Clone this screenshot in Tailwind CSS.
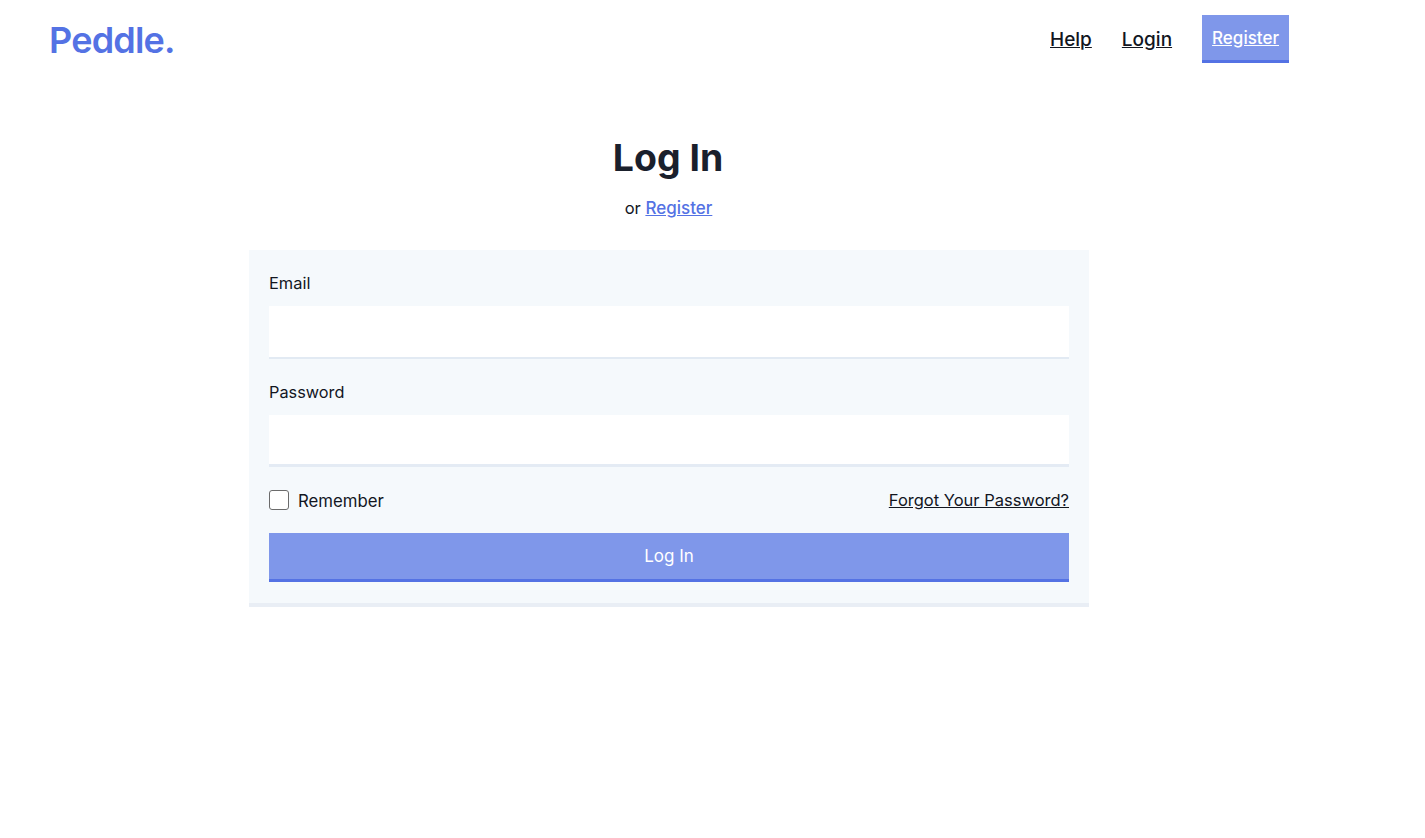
<!DOCTYPE html>
<html lang="en">
<head>
    <meta charset="UTF-8">
    <meta name="viewport" content="width=device-width, initial-scale=1.0">
    <title>Peddle - Log In</title>
    <script src="https://cdn.jsdelivr.net/npm/@tailwindcss/browser@4"></script>
</head>
<body class="bg-white min-h-screen font-['Inter',sans-serif] text-[#12161f]">
    <!-- Nav -->
    <nav class="flex items-center justify-between h-[78px] pl-[49px] pr-[136px]">
        <a href="#" class="pt-[2px] text-[36px] font-semibold text-[#5472e4] tracking-[-0.8px]">Peddle.</a>
        <div class="flex items-center gap-[30px]">
            <a href="#" class="pt-[2px] text-[19px] font-medium underline">Help</a>
            <a href="#" class="pt-[2px] text-[19px] font-medium underline">Login</a>
            <a href="#" class="h-12 px-[10px] pt-[11px] bg-[#7f97ea] border-b-[3px] border-[#5472e4] text-[17px] text-white font-medium underline">Register</a>
        </div>
    </nav>

    <main class="w-[840px] ml-[249px] mt-[54px]">
        <h1 class="text-center pr-[2px] text-[37.4px] leading-[52px] font-bold text-[#1a202c]">Log In</h1>
        <p class="text-center pr-[1px] mt-[12px] leading-6 text-[16.5px]">or <a href="#" class="text-[17px] font-medium text-[#5472e4] underline">Register</a></p>

        <!-- Form -->
        <form class="mt-[30px] bg-[#f5f9fc] border-b-[4px] border-[#e9eef5] px-5 pt-[21px] pb-[21px]">
            <label class="block leading-6 text-[16.4px]">Email</label>
            <input type="text" class="block w-full h-[53px] mt-[11px] bg-white border-b-2 border-[#e2eaf3]">
            <label class="block leading-6 mt-[21px] text-[16.3px]">Password</label>
            <input type="password" class="block w-full h-[52px] mt-[11px] bg-white border-b-[3px] border-[#e4ebf4]">
            <div class="flex items-center justify-between h-[25px] mt-[20px]">
                <label class="flex items-center gap-[9px]">
                    <span class="w-5 h-5 bg-white border border-[#6b6b6b] rounded-[3px]"></span>
                    <span class="text-[16.8px] translate-y-[2px]">Remember</span>
                </label>
                <a href="#" class="underline text-[16.5px] translate-y-px">Forgot Your Password?</a>
            </div>
            <button type="button" class="block w-full h-[49px] mt-[21px] pt-[2px] bg-[#7f97ea] border-b-[3px] border-[#5472e4] text-white text-[17px]">Log In</button>
        </form>
    </main>
</body>
</html>
